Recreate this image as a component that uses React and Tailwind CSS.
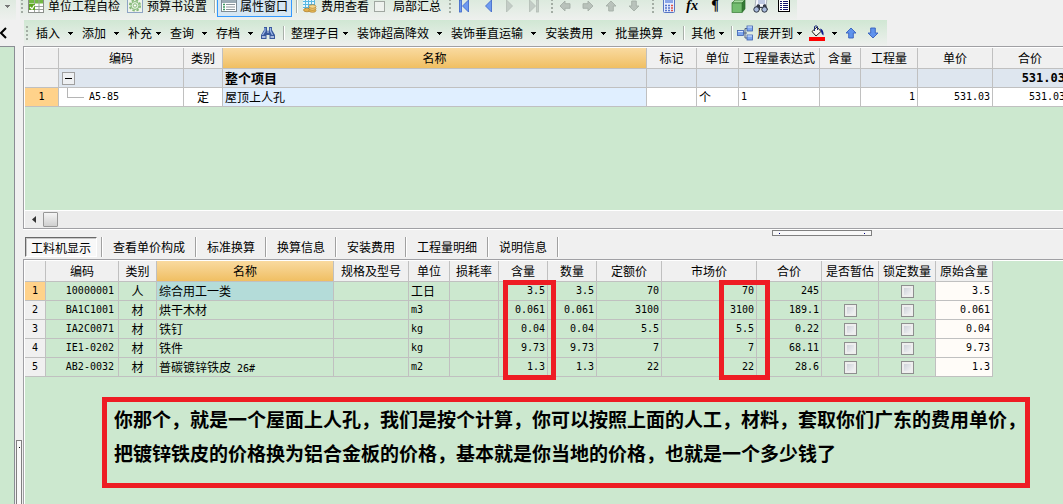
import React from 'react';

const mono = "font-['DejaVu_Sans_Mono','Noto_Sans_CJK_SC',monospace] text-[10px]";

const Caret = ({ className = 'text-black' }) => (
  <svg className={`h-[3px] w-[5px] shrink-0 ${className}`} viewBox="0 0 5 3" fill="currentColor" shapeRendering="crispEdges">
    <path d="M0 0h5v1H4v1H3v1H2V2H1V1H0z" />
  </svg>
);

const Grip = ({ className = '' }) => (
  <svg className={`h-4 w-[3px] shrink-0 ${className}`} viewBox="0 0 3 16" fill="#a3ada4" shapeRendering="crispEdges">
    {[1, 5, 9, 13].map((y) => (
      <rect key={y} x="0" y={y} width="2" height="2" />
    ))}
  </svg>
);

const Sep = ({ className = '' }) => (
  <span className={`h-[14px] w-0.5 shrink-0 border-r border-white bg-[#a9b0aa] ${className}`} />
);

const Svg = ({ size = 16, children, className = '' }) => (
  <svg width={size} height="16" viewBox={`0 0 ${size} 16`} className={`shrink-0 ${className}`} fill="none">
    {children}
  </svg>
);

const SheetIcon = () => (
  <Svg>
    <rect x="0.5" y="1.5" width="15" height="13" fill="#fff" stroke="#8a8f8a" />
    <path d="M1 2h14v3.500H1z" fill="#72b944" />
    <path d="M1 8.500h14M1 11.500h14M6.500 2v12M11 2v12" stroke="#9aa39a" />
    <rect x="1" y="6" width="6" height="6" fill="#5aa51e" />
    <path d="M2 9l2 2 2.500-4" stroke="#fff" strokeWidth="1.200" />
  </Svg>
);

const GearIcon = () => (
  <Svg>
    <rect x="0.5" y="0.5" width="15" height="14" fill="#eef4ea" stroke="#8ea3c4" />
    <circle cx="8" cy="7.500" r="5.200" stroke="#86b97a" strokeWidth="1.800" strokeDasharray="2.400 1.684" />
    <circle cx="8" cy="7.500" r="4" fill="#dff0d9" stroke="#86b97a" />
    <circle cx="8" cy="7.500" r="1.700" fill="#fff" stroke="#86b97a" />
  </Svg>
);

const PropertyIcon = () => (
  <Svg>
    <rect x="0.5" y="1.500" width="15" height="12" fill="#fff" stroke="#7e8b94" />
    <path d="M1 2h14v3H1z" fill="#9aabb5" />
    <path d="M2 6.500h2M2 9h2M2 11.500h2" stroke="#3b9a62" strokeWidth="1.500" />
    <path d="M5 6.500h9M5 9h9M5 11.500h9" stroke="#8b959b" />
  </Svg>
);

const CostIcon = () => (
  <Svg>
    <rect x="1" y="1" width="12" height="10" fill="#e8f7fd" />
    <path d="M1 3.500h12M1 6.500h12M1 9.500h12M3.500 1v10M6.500 1v10M9.500 1v10M12.500 1v10" stroke="#58b8e2" />
    <ellipse cx="5" cy="12" rx="3.500" ry="1.800" fill="#e3b14d" stroke="#a5711c" strokeWidth=".6" />
    <ellipse cx="10.500" cy="12.500" rx="3.500" ry="1.800" fill="#e9bd5b" stroke="#a5711c" strokeWidth=".6" />
    <ellipse cx="10.500" cy="10.500" rx="3.500" ry="1.800" fill="#f2cd78" stroke="#a5711c" strokeWidth=".6" />
    <ellipse cx="10.500" cy="8.500" rx="3.500" ry="1.800" fill="#f5d88d" stroke="#a5711c" strokeWidth=".6" />
  </Svg>
);

const NavIcon = ({ bar, flip, off }) => (
  <Svg size={11}>
    <g transform={flip ? 'translate(11 0) scale(-1 1)' : undefined} fill={off ? '#c3ccc6' : '#6d9af0'} stroke={off ? '#b2bcb5' : '#3a63c8'} strokeWidth=".8">
      {bar && <rect x="0.5" y="2" width="2" height="12" />}
      <path d="M9.500 2v12L3.500 8z" />
    </g>
  </Svg>
);

const ArrowIcon = ({ deg, blue }) => (
  <Svg size={12}>
    <path
      transform={`rotate(${deg} 6 8)`}
      d="M6 3l5 5H8.300v5H3.700V8H1z"
      fill={blue ? '#5f93ec' : '#b9c2bb'}
      stroke={blue ? '#3560bd' : '#a5afa7'}
      strokeWidth=".9"
    />
  </Svg>
);

const CalcIcon = () => (
  <Svg size={12}>
    <rect x="0.5" y="0.500" width="11" height="14" rx="1" fill="#e9eefc" stroke="#5876c4" />
    <path d="M2 2h8v3H2z" fill="#8aa6e8" />
    <path d="M2 7.500h2M5 7.500h2M2 10h2M5 10h2M2 12.500h2M5 12.500h2" stroke="#5374cc" strokeWidth="1.400" />
    <path d="M8 7.500h2M8 10h2M8 12.500h2" stroke="#dc5146" strokeWidth="1.400" />
  </Svg>
);

const CubeIcon = () => (
  <Svg size={15}>
    <path d="M1 5l3-3h10l-3 3z" fill="#a9dca2" stroke="#377a35" strokeWidth=".7" />
    <path d="M11 5l3-3v9l-3 3.500z" fill="#347a35" stroke="#2c6a2c" strokeWidth=".7" />
    <rect x="1" y="5" width="10" height="9.500" fill="#74bd70" stroke="#377a35" strokeWidth=".7" />
  </Svg>
);

const PreviewIcon = () => (
  <Svg>
    <path d="M3 0h11l-1 9H2z" fill="#f4f7fc" stroke="#8d97a5" strokeWidth=".7" />
    <path d="M5 3h7M5 5h7" stroke="#8a9ecb" />
    <path d="M4 7l1-1 2 1v2h3V7l2-1 1 1 2 5H9v-2H7v2H1z" fill="#343b48" />
    <circle cx="3.500" cy="11.500" r="2.700" fill="#a8bbdc" stroke="#2e3542" />
    <circle cx="11.500" cy="11.500" r="2.700" fill="#a8bbdc" stroke="#2e3542" />
  </Svg>
);

const ListIcon = () => (
  <Svg size={12}>
    <g shapeRendering="crispEdges">
      <rect x="0.500" y="0.500" width="11" height="13" fill="#fff" stroke="#000" />
      <path d="M2 3.500h2M2 5.500h2M2 7.500h2M2 9.500h2M2 11.500h2M5 3.500h5M5 5.500h5M5 7.500h5M5 9.500h5M5 11.500h5" stroke="#10106e" />
    </g>
  </Svg>
);

const BinocularsIcon = () => (
  <Svg>
    <path d="M4 2h3v3l.5 1h1L9 5V2h3v3l3 5v4H9.500v-4h-3v4H1v-4l3-5z" fill="#39599c" />
    <path d="M5 3v3L2.500 10M10.500 3v3l2 4" stroke="#9db8ea" strokeWidth="1.200" />
    <path d="M2 12h3.500M10.500 12H14" stroke="#cfdcf6" strokeWidth="1.500" />
    <path d="M7 7h2" stroke="#c5d3f1" />
  </Svg>
);

const TreeIcon = () => (
  <Svg>
    <path d="M6 8h4M8 8V3.500h2M8 8v5h2" stroke="#51617f" />
    <g fill="#7fa8ee" stroke="#3c5fae" strokeWidth=".8">
      <rect x="0.500" y="5.500" width="6" height="5" />
      <rect x="10" y="1" width="5.500" height="5" />
      <rect x="10" y="10" width="5.500" height="5" />
    </g>
    <path d="M1 6.500h5M10.500 2h4.500M10.500 11h4.500" stroke="#dbe7fd" />
  </Svg>
);

const FillIcon = () => (
  <Svg>
    <path d="M3 6.500L8 2l4 4.500-5 4.500z" fill="#f6f6ee" stroke="#222" />
    <path d="M5.500 6V1.500Q7 0 8.500 1.500V5" stroke="#1c2b78" />
    <path d="M11 3.500q4 1 3.500 7-2-1-2.500-4z" fill="#0c1a8c" />
    <path d="M0 12h16v4H0z" fill="#f00" />
  </Svg>
);

const IconButton = ({ label, children, className = '' }) => (
  <button type="button" aria-label={label} className={`flex shrink-0 items-center justify-center ${className}`}>
    {children}
  </button>
);

const MenuButton = ({ label, tight, last }) => (
  <button type="button" className={`flex shrink-0 items-center ${tight ? 'gap-1' : 'gap-2'} ${last ? 'pr-[7px]' : 'pr-[9px]'}`}>
    {label}
    <Caret />
  </button>
);

const TopToolbar = () => (
  <div className="flex h-5 shrink-0 overflow-hidden leading-3">
    <div className="flex w-4 shrink-0 items-center bg-linear-to-b from-[#dfeae0] to-[#eef0ee] pb-2 pl-[5px]">
      <Caret className="text-[#777]" />
    </div>
    <div className="ml-1 flex shrink-0 items-center bg-linear-to-b from-[#dceade] to-[#eef0ee] pb-2">
      <Grip className="mr-1 ml-px" />
      <IconButton label="检查" className="mr-1"><SheetIcon /></IconButton>
      <button type="button" className="mr-[7px] shrink-0">单位工程自检</button>
      <IconButton label="设置" className="mr-1"><GearIcon /></IconButton>
      <button type="button" className="mr-[7px] shrink-0">预算书设置</button>
      <Sep />
      <button type="button" className="ml-px flex h-[22px] shrink-0 items-center gap-[3px] border border-[#3399ff] bg-[#d5e6f3] px-[3px]">
        <PropertyIcon />
        属性窗口
      </button>
      <Sep className="mr-1 ml-1" />
      <button type="button" className="flex shrink-0 items-center gap-[3px]">
        <CostIcon />
        费用查看
      </button>
      <label className="ml-[5px] flex shrink-0 items-center gap-2">
        <input type="checkbox" className="h-[11px] w-[11px] appearance-none border border-[#a0a7a1] bg-[#eef2ee]" />
        局部汇总
      </label>
      <Grip className="mr-[7px] ml-2" />
      <div className="flex shrink-0 gap-3">
        <IconButton label="第一条"><NavIcon bar /></IconButton>
        <IconButton label="上一条"><NavIcon /></IconButton>
        <IconButton label="下一条"><NavIcon flip off /></IconButton>
        <IconButton label="最后一条"><NavIcon bar flip off /></IconButton>
      </div>
      <Grip className="mr-[5px] ml-3" />
      <div className="flex shrink-0 gap-[11px]">
        <IconButton label="左移"><ArrowIcon deg={-90} /></IconButton>
        <IconButton label="右移"><ArrowIcon deg={90} /></IconButton>
        <IconButton label="上移"><ArrowIcon deg={0} /></IconButton>
        <IconButton label="下移"><ArrowIcon deg={180} /></IconButton>
      </div>
      <Grip className="mr-1 ml-3" />
      <div className="flex shrink-0 items-center gap-[3px] pr-[3px]">
        <IconButton label="计算器" className="w-5"><CalcIcon /></IconButton>
        <button type="button" className="w-5 font-['Liberation_Serif',serif] text-[14px] font-bold italic">fx</button>
        <button type="button" className="w-5 font-['Liberation_Serif',serif] text-[14px] font-bold">¶</button>
        <IconButton label="模型" className="w-5"><CubeIcon /></IconButton>
        <IconButton label="预览" className="w-5"><PreviewIcon /></IconButton>
        <IconButton label="列表" className="w-5"><ListIcon /></IconButton>
      </div>
    </div>
  </div>
);

const EditToolbar = () => (
  <div className="flex h-[26px] shrink-0 overflow-hidden">
    <button type="button" aria-label="收起" className="w-6 shrink-0">
      <svg className="h-3 w-[7px]" viewBox="0 0 7 12" fill="none" stroke="#000" strokeWidth="2">
        <path d="M6 1L1 6l5 5" />
      </svg>
    </button>
    <div className="flex shrink-0 items-center bg-linear-to-b from-[#d0e7d3] to-[#eef0ee] pr-2 pl-0.5">
      <Grip className="mr-[7px]" />
      <MenuButton label="插入" />
      <MenuButton label="添加" />
      <MenuButton label="补充" tight />
      <MenuButton label="查询" />
      <MenuButton label="存档" last />
      <IconButton label="查找" className="mr-[7px]"><BinocularsIcon /></IconButton>
      <Sep className="mr-[6px]" />
      <MenuButton label="整理子目" tight />
      <MenuButton label="装饰超高降效" />
      <MenuButton label="装饰垂直运输" />
      <MenuButton label="安装费用" />
      <MenuButton label="批量换算" last />
      <Sep className="mr-[6px]" />
      <MenuButton label="其他" tight last />
      <Sep className="mr-1" />
      <button type="button" className="mr-[7px] flex shrink-0 items-center gap-1">
        <TreeIcon />
        展开到
        <Caret />
      </button>
      <button type="button" aria-label="填充颜色" className="mr-2 flex shrink-0 items-center gap-[7px]">
        <FillIcon />
        <Caret />
      </button>
      <IconButton label="上移" className="mr-[10px]"><ArrowIcon deg={0} blue /></IconButton>
      <IconButton label="下移"><ArrowIcon deg={180} blue /></IconButton>
    </div>
  </div>
);

const Th = ({ children, active }) => (
  <th
    scope="col"
    className={`h-[21px] overflow-hidden border-r border-b border-[#c0c0c0] p-0 text-center leading-5 font-normal whitespace-nowrap ${
      active ? 'bg-linear-to-b from-[#f9da9f] to-[#f0bf62]' : 'bg-[#f0f0f0]'
    }`}
  >
    {children}
  </th>
);

const Td = ({ children, className = '' }) => (
  <td className={`h-[19px] overflow-hidden border-r border-b border-[#c0c0c0] px-0.5 py-0 leading-[18px] whitespace-nowrap ${className}`}>
    {children}
  </td>
);

const Cols = ({ widths }) => (
  <colgroup>
    {widths.map((w, i) => (
      <col key={i} style={{ width: w }} />
    ))}
  </colgroup>
);

const itemWidths = [34, 125, 39, 424, 50, 42, 81, 41, 57, 75, 75];
const itemHeads = ['', '编码', '类别', '名称', '标记', '单位', '工程量表达式', '含量', '工程量', '单价', '合价'];

const ItemTable = () => (
  <table className="w-[1043px] table-fixed border-separate border-spacing-0">
    <Cols widths={itemWidths} />
    <thead>
      <tr>
        {itemHeads.map((h, i) => (
          <Th key={i} active={h === '名称'}>{h}</Th>
        ))}
      </tr>
    </thead>
    <tbody>
      <tr className="bg-[#dee6ef]">
        <Td className="bg-[#f0f0f0]" />
        <Td>
          <button
            type="button"
            aria-label="折叠"
            className="ml-px flex h-[13px] w-[13px] items-center justify-center border border-[#a0a0a0] bg-[#eef0f2]"
          >
            <span className="h-px w-[7px] bg-black" />
          </button>
        </Td>
        <Td />
        <Td className="text-[13px] font-bold">整个项目</Td>
        <Td /><Td /><Td /><Td /><Td /><Td />
        <Td className="text-right font-['DejaVu_Sans_Mono',monospace] text-[12px] font-bold">531.03</Td>
      </tr>
      <tr className="bg-white">
        <Td className={`bg-[#ffd28a] text-center ${mono}`}>1</Td>
        <Td className={mono}>
          <div className="flex pl-[6px]">
            <span className="mr-[5px] h-[10px] w-[17px] border-b border-l border-[#b5b5b5]" />
            A5-85
          </div>
        </Td>
        <Td className="text-center">定</Td>
        <Td className="bg-[#e0efff]">屋顶上人孔</Td>
        <Td />
        <Td>个</Td>
        <Td className={mono}>1</Td>
        <Td />
        <Td className={`text-right ${mono}`}>1</Td>
        <Td className={`text-right ${mono}`}>531.03</Td>
        <Td className={`text-right ${mono}`}>531.03</Td>
      </tr>
    </tbody>
  </table>
);

const resWidths = [21, 73, 38, 177, 75, 41, 49, 49, 49, 65, 95, 65, 57, 57, 57];
const resHeads = ['', '编码', '类别', '名称', '规格及型号', '单位', '损耗率', '含量', '数量', '定额价', '市场价', '合价', '是否暂估', '锁定数量', '原始含量'];

const resources = [
  { code: '10000001', kind: '人', name: '综合用工一类', unit: '工日', qty: '3.5', price: '70', total: '245' },
  { code: 'BA1C1001', kind: '材', name: '烘干木材', unit: 'm3', qty: '0.061', price: '3100', total: '189.1' },
  { code: 'IA2C0071', kind: '材', name: '铁钉', unit: 'kg', qty: '0.04', price: '5.5', total: '0.22' },
  { code: 'IE1-0202', kind: '材', name: '铁件', unit: 'kg', qty: '9.73', price: '7', total: '68.11' },
  { code: 'AB2-0032', kind: '材', name: '普碳镀锌铁皮', spec: '26#', unit: 'm2', qty: '1.3', price: '22', total: '28.6' },
];

const GridCheck = ({ label }) => (
  <input
    type="checkbox"
    aria-label={label}
    className="mx-auto block h-[13px] w-[13px] appearance-none border border-[#8e8f8f] bg-linear-to-br from-[#c6cbd3] to-[#fbfbfb] shadow-[inset_0_0_0_2px_#eeeeee]"
  />
);

const ResourceTable = () => (
  <table className="w-[968px] table-fixed border-separate border-spacing-0">
    <Cols widths={resWidths} />
    <thead>
      <tr>
        {resHeads.map((h, i) => (
          <Th key={i} active={h === '名称'}>{h}</Th>
        ))}
      </tr>
    </thead>
    <tbody>
      {resources.map((r, i) => {
        const selected = i === 0;
        return (
          <tr key={r.code}>
            <Td className={`text-center ${mono} ${selected ? 'bg-[#ffd28a]' : 'bg-[#f0f0f0]'}`}>{i + 1}</Td>
            <Td className={`pr-1 text-right ${mono}`}>{r.code}</Td>
            <Td className="text-center">{r.kind}</Td>
            <Td className={selected ? 'bg-[#b4dcd9]' : ''}>
              {r.name}
              {r.spec && <span className={`leading-none ${mono}`}> {r.spec}</span>}
            </Td>
            <Td />
            <Td className={r.unit === '工日' ? '' : mono}>{r.unit}</Td>
            <Td />
            <Td className={`text-right ${mono}`}>{r.qty}</Td>
            <Td className={`text-right ${mono}`}>{r.qty}</Td>
            <Td className={`text-right ${mono}`}>{r.price}</Td>
            <Td className={`text-right ${mono}`}>{r.price}</Td>
            <Td className={`text-right ${mono}`}>{r.total}</Td>
            <Td>{!selected && <GridCheck label={`${r.name} 是否暂估`} />}</Td>
            <Td><GridCheck label={`${r.name} 锁定数量`} /></Td>
            <Td className={`bg-[#fffcf8] text-right ${mono}`}>{r.qty}</Td>
          </tr>
        );
      })}
    </tbody>
  </table>
);

const tabs = ['查看单价构成', '标准换算', '换算信息', '安装费用', '工程量明细', '说明信息'];

const TabBar = () => (
  <div className="flex h-[22px] shrink-0 items-start pl-0.5">
    <button
      type="button"
      className="mr-1 h-5 shrink-0 border border-t-[#696969] border-r-white border-b-white border-l-[#696969] bg-[#f8f8f8] px-[5px] pt-0.5 leading-4 shadow-[inset_1px_1px_0_#c8c8c8]"
    >
      工料机显示
    </button>
    <span className="h-5 w-0.5 shrink-0 border-r border-white bg-[#a0a0a0]" />
    {tabs.map((t) => (
      <React.Fragment key={t}>
        <button type="button" className="h-5 shrink-0 px-[10px] leading-5">{t}</button>
        <span className="h-5 w-0.5 shrink-0 border-r border-white bg-[#a0a0a0]" />
      </React.Fragment>
    ))}
  </div>
);

const App = () => (
  <div className="flex h-screen flex-col overflow-hidden bg-[#f0f0f0] font-['Noto_Sans_CJK_SC',sans-serif] text-[12px] leading-4 whitespace-nowrap text-black">
    <TopToolbar />
    <EditToolbar />

    <div className="flex min-h-0 flex-1">
      {/* Collapsed side panel */}
      <div className="w-[15px] shrink-0 border-t border-r border-[#8a8d94] bg-[#cce8cf]" />
      <div className="flex w-2 shrink-0 flex-col justify-end px-px">
        <div className="h-16 border border-b-0 border-[#808080] bg-[#f8f8f8] pt-[6px] pl-0.5">
          <div className="h-px w-px bg-black" />
        </div>
      </div>

      <div className="flex min-w-0 flex-1 flex-col">
        {/* Budget items */}
        <div className="flex h-[183px] shrink-0 flex-col overflow-hidden border-t border-b border-l border-[#a0a0a4] bg-[#cce8cf]">
          <div className="flex-1 overflow-hidden border-t border-l border-white">
            <ItemTable />
          </div>
          <div className="flex h-[18px] shrink-0 items-center border-t border-l border-white bg-[#ececec]">
            <button type="button" aria-label="向左滚动" className="flex h-4 w-[18px] items-center justify-center">
              <svg className="h-[7px] w-1" viewBox="0 0 4 7" fill="#333">
                <path d="M4 0v7L0 3.500z" />
              </svg>
            </button>
            <div className="h-[15px] w-[15px] rounded-[1px] border border-[#979797] bg-linear-to-b from-[#f5f5f5] to-[#cfcfcf]" />
          </div>
        </div>

        {/* Splitter */}
        <div className="h-2 shrink-0 border-t border-white">
          <div className="ml-[749px] flex h-[6px] w-[100px] items-center justify-between border border-[#808080] bg-[#f8f8f8] px-[6px]">
            <span className="h-px w-px bg-[#000080]" />
            <span className="h-px w-px bg-[#000080]" />
          </div>
        </div>

        <TabBar />

        {/* Labour and materials */}
        <div className="min-h-0 flex-1 overflow-hidden border-t border-l border-[#a0a0a4]">
          <div className="h-full border-t border-l border-white bg-[#cce8cf]">
            <div className="relative">
              <ResourceTable />
              <div className="pointer-events-none absolute top-[19px] left-[478px] h-[100px] w-[53px] border-5 border-[#ee1c24]" />
              <div className="pointer-events-none absolute top-[19px] left-[694px] h-[100px] w-[51px] border-5 border-[#ee1c24]" />
            </div>
            <div className="mt-5 mr-[33px] ml-[77px] border-5 border-[#ee1c24] pb-[13px] pl-[7px] text-[19px] leading-[34px] font-bold">
              <p>你那个，就是一个屋面上人孔，我们是按个计算，你可以按照上面的人工，材料，套取你们广东的费用单价，</p>
              <p>把镀锌铁皮的价格换为铝合金板的价格，基本就是你当地的价格，也就是一个多少钱了</p>
            </div>
          </div>
        </div>
      </div>
    </div>
  </div>
);

export default App;
